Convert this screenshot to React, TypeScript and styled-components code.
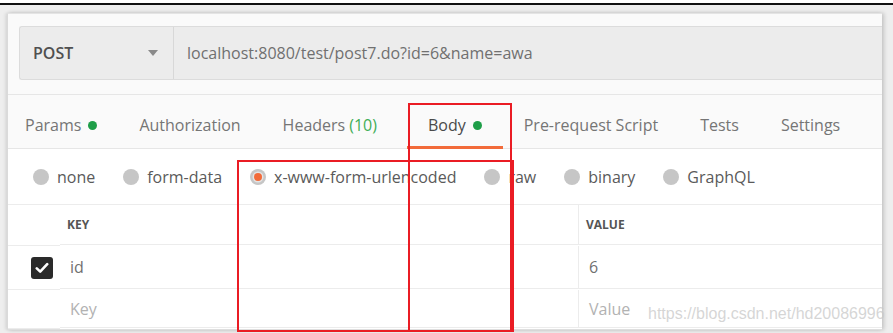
import styled, { createGlobalStyle } from "styled-components";

const GlobalStyle = createGlobalStyle`
  html, body {
    margin: 0;
    padding: 0;
    background: #ffffff;
    font-family: "Open Sans", "Liberation Sans", sans-serif;
  }
`;

const Screen = styled.div`
  position: relative;
  width: 893px;
  height: 333px;
  overflow: hidden;
  background: #ffffff;
`;

const TopRule = styled.div`
  margin-top: 3px;
  height: 2px;
  background: #111111;
`;

const Frame = styled.div`
  background: #eeeeee;
  padding: 8px 0 0 7px;
  height: 328px;
  box-sizing: border-box;
  overflow: hidden;
`;

const Panel = styled.div`
  width: 874px;
  background: #fafafa;
  border-top: 1px solid #e4e4e4;
  border-left: 1px solid #dadada;
  border-bottom: 1px solid #dedede;
  box-shadow: 2px 0 4px rgba(0, 0, 0, 0.18), -2px 0 3px rgba(0, 0, 0, 0.08);
  overflow: hidden;
  display: flex;
  flex-direction: column;
`;

const UrlBar = styled.div`
  flex-shrink: 0;
  display: flex;
  height: 52px;
  margin: 12px 0 14px 11px;
  background: #ececec;
  border: 1px solid #dcdcdc;
  border-right: none;
  border-radius: 3px 0 0 3px;
`;

const MethodSelect = styled.div`
  width: 154px;
  flex-shrink: 0;
  display: flex;
  align-items: center;
  justify-content: space-between;
  box-sizing: border-box;
  padding: 0 15px 0 13px;
  border-right: 1px solid #d8d8d8;
  font-size: 16px;
  font-weight: 600;
  color: #505050;
`;

const Caret = styled.span`
  width: 0;
  height: 0;
  border-left: 5px solid transparent;
  border-right: 5px solid transparent;
  border-top: 6px solid #8a8a8a;
`;

const UrlInput = styled.div`
  display: flex;
  align-items: center;
  padding-left: 13px;
  font-size: 16px;
  color: #707070;
`;

const TabsRow = styled.div`
  flex-shrink: 0;
  display: flex;
  height: 55px;
  box-sizing: border-box;
  padding-top: 7px;
  border-top: 1px solid #e6e6e6;
  border-bottom: 1px solid #e6e6e6;
  background: #fafafa;
`;

const Tab = styled.div<{ $active?: boolean }>`
  position: relative;
  display: flex;
  align-items: center;
  gap: 7px;
  padding: 0 21px;
  font-size: 16px;
  color: ${(p) => (p.$active ? "#4a4a4a" : "#757575")};
  &:first-child {
    padding-left: 17px;
  }
  &::after {
    content: "";
    display: ${(p) => (p.$active ? "block" : "none")};
    position: absolute;
    left: 0;
    right: 0;
    bottom: -1px;
    height: 3px;
    background: #f26b3a;
  }
`;

const Dot = styled.span`
  width: 9px;
  height: 9px;
  border-radius: 50%;
  background: #1e9e48;
`;

const Count = styled.span`
  padding-left: 4px;
  padding-right: 9px;
  color: #3fae57;
`;

const Content = styled.div`
  background: #ffffff;
  display: flex;
  flex-direction: column;
`;

const RadioRow = styled.div`
  display: flex;
  align-items: center;
  gap: 28px;
  height: 55px;
  padding-left: 25px;
`;

const RadioItem = styled.label`
  display: flex;
  align-items: center;
  gap: 8px;
  font-size: 16px;
  color: #5a5a5a;
`;

const RadioCircle = styled.span<{ $checked?: boolean }>`
  width: 16px;
  height: 16px;
  border-radius: 50%;
  background: #c6c6c6;
  display: flex;
  align-items: center;
  justify-content: center;
  &::after {
    content: "";
    display: ${(p) => (p.$checked ? "block" : "none")};
    width: 8px;
    height: 8px;
    border-radius: 50%;
    background: #f26b3a;
    box-shadow: 0 0 0 1.5px #e4e4e4;
  }
`;

const Table = styled.div`
  border-top: 1px solid #ececec;
  display: grid;
  grid-template-columns: 52px 518px 1fr;
`;

const Cell = styled.div<{ $h: number; $header?: boolean; $placeholder?: boolean }>`
  height: ${(p) => p.$h}px;
  display: flex;
  align-items: center;
  box-sizing: border-box;
  padding-left: ${(p) => (p.$header ? 7 : 10)}px;
  border-bottom: 1px solid #ececec;
  font-size: ${(p) => (p.$header ? 12 : 16)}px;
  font-weight: ${(p) => (p.$header ? 700 : 400)};
  color: ${(p) => (p.$header ? "#555555" : p.$placeholder ? "#b2b2b2" : "#707070")};
  & + & {
    border-left: 1px solid #ececec;
  }
`;

const CheckCell = styled.div<{ $h: number }>`
  height: ${(p) => p.$h}px;
  display: flex;
  align-items: center;
  justify-content: flex-end;
  padding-right: 7px;
  border-bottom: 1px solid #ececec;
`;

const CheckBox = styled.span`
  width: 22px;
  height: 22px;
  border-radius: 3px;
  background: #2a2a2a;
  display: flex;
  align-items: center;
  justify-content: center;
`;

const Annotation = styled.div<{ $x: number; $y: number; $w: number; $h: number }>`
  position: absolute;
  left: ${(p) => p.$x}px;
  top: ${(p) => p.$y}px;
  width: ${(p) => p.$w}px;
  height: ${(p) => p.$h}px;
  border: 2px solid #ea1c24;
  box-sizing: border-box;
  pointer-events: none;
`;

const Watermark = styled.div`
  position: absolute;
  left: 648px;
  top: 305px;
  font-family: "Liberation Sans", Arial, sans-serif;
  font-size: 16px;
  color: rgba(200, 200, 200, 0.75);
  white-space: nowrap;
`;

const tabs = [
  { label: "Params", dot: true },
  { label: "Authorization" },
  { label: "Headers", count: "(10)" },
  { label: "Body", dot: true, active: true },
  { label: "Pre-request Script" },
  { label: "Tests" },
  { label: "Settings" },
];

const bodyTypes = ["none", "form-data", "x-www-form-urlencoded", "raw", "binary", "GraphQL"];

export default function App() {
  return (
    <Screen>
      <GlobalStyle />
      <TopRule />
      <Frame>
        <Panel>
          <UrlBar>
            <MethodSelect>
              POST
              <Caret />
            </MethodSelect>
            <UrlInput>localhost:8080/test/post7.do?id=6&amp;name=awa</UrlInput>
          </UrlBar>
          <TabsRow>
            {tabs.map((t) => (
              <Tab key={t.label} $active={t.active}>
                <span>
                  {t.label}
                  {t.count && <Count>{t.count}</Count>}
                </span>
                {t.dot && <Dot />}
              </Tab>
            ))}
          </TabsRow>
          <Content>
            <RadioRow>
              {bodyTypes.map((b) => (
                <RadioItem key={b}>
                  <RadioCircle $checked={b === "x-www-form-urlencoded"} />
                  {b}
                </RadioItem>
              ))}
            </RadioRow>
            <Table>
              <CheckCell $h={40} />
              <Cell $h={40} $header>KEY</Cell>
              <Cell $h={40} $header>VALUE</Cell>

              <CheckCell $h={43}>
                <CheckBox>
                  <svg width="14" height="12" viewBox="0 0 14 12">
                    <path d="M1.8 6.4 L5.2 9.6 L12.2 2.2" fill="none" stroke="#ffffff" strokeWidth="2.6" strokeLinecap="round" strokeLinejoin="round" />
                  </svg>
                </CheckBox>
              </CheckCell>
              <Cell $h={43}>id</Cell>
              <Cell $h={43}>6</Cell>

              <CheckCell $h={38} />
              <Cell $h={38} $placeholder>Key</Cell>
              <Cell $h={38} $placeholder>Value</Cell>
            </Table>
          </Content>
        </Panel>
      </Frame>
      <Annotation $x={408} $y={103} $w={104} $h={229} />
      <Annotation $x={237} $y={160} $w={277} $h={172} />
      <Watermark>https://blog.csdn.net/hd20086996</Watermark>
    </Screen>
  );
}
